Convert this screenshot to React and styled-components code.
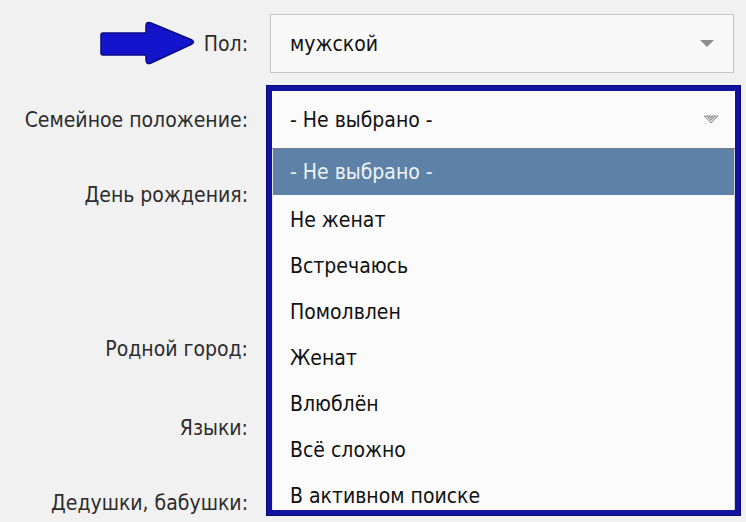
import React from 'react';
import styled, { createGlobalStyle } from 'styled-components';

const GlobalStyle = createGlobalStyle`
    html, body {
        margin: 0;
        padding: 0;
        background: #f1f1f1;
    }
    body {
        font-family: "DejaVu Sans Condensed", "DejaVu Sans", Tahoma, sans-serif;
        -webkit-font-smoothing: antialiased;
    }
`;

const Page = styled.div`
    width: 746px;
    height: 522px;
    overflow: hidden;
    box-sizing: border-box;
    padding-top: 14px;
    background: #f1f1f1;
    position: relative;
`;

const Row = styled.div`
    display: grid;
    grid-template-columns: 248px 464px;
    column-gap: 22px;
    height: ${props => props.height}px;
    margin-bottom: ${props => props.gap || 0}px;
    align-items: ${props => (props.top ? 'start' : 'center')};
`;

const Label = styled.div`
    display: flex;
    justify-content: flex-end;
    align-items: center;
    gap: 8px;
    font-size: 21px;
    line-height: 24px;
    color: #2c2c2c;
    padding-top: ${props => props.offset || 0}px;
    white-space: nowrap;
`;

const Select = styled.div`
    height: 59px;
    box-sizing: border-box;
    border: 1px solid #c6c6c6;
    background: #f9f9f9;
    display: flex;
    align-items: center;
    justify-content: space-between;
    padding: 0 18px 0 19px;
    font-size: 21px;
    color: #111;
`;

const FieldSlot = styled.div`
    position: relative;
    height: 100%;
`;

const OpenFrame = styled.div`
    position: absolute;
    top: 0;
    left: -3px;
    width: 473px;
    height: 429px;
    overflow: hidden;
    box-sizing: border-box;
    border: 5px solid #1212a0;
    box-shadow: 0 0 0 1px #0a0a78;
    background: #fbfbfb;
    z-index: 2;
`;

const OpenHead = styled.div`
    height: 57px;
    display: flex;
    align-items: center;
    justify-content: space-between;
    padding: 0 16px 0 18px;
    font-size: 21px;
    color: #111;
    border-bottom: 1px solid #7a7f86;
`;

const List = styled.div`
    display: flex;
    flex-direction: column;
    border-left: 1px solid #e6e6e6;
    border-right: 1px solid #d0d0d0;
`;

const Option = styled.div`
    height: 46px;
    box-sizing: border-box;
    display: flex;
    align-items: center;
    padding: ${props => (props.active ? '0' : '3px')} 0 0 17px;
    font-size: 21px;
    color: ${props => (props.active ? '#eef3f8' : '#111')};
    background: ${props => (props.active ? '#5e81a7' : 'transparent')};
`;

const Arrow = () => (
    <svg width="96" height="46" viewBox="0 0 96 46">
        <path
            d="M3 12 L46 12 L46 5 Q46 0 51 2 L92 19 Q95 21 92 23 L51 42 Q46 44 46 39 L46 34 L3 34 Q1 34 1 32 L1 14 Q1 12 3 12 Z"
            fill="#1414cc"
            stroke="#0a0a82"
            strokeWidth="1.5"
            strokeLinejoin="round"
        />
    </svg>
);

const Caret = ({ hatched }) => (
    <svg width="16" height="9" viewBox="0 0 16 9">
        {hatched ? (
            <>
                <path d="M1 1 L15 1 L8 8 Z" fill="#cfcfcf" stroke="#9a9a9a" strokeWidth="1" />
                <path d="M4 1 L8 5 L12 1 M6 1 L8 3 L10 1" stroke="#888" strokeWidth="0.8" fill="none" />
            </>
        ) : (
            <path d="M1 1 L15 1 L8 8 Z" fill="#8f8f8f" />
        )}
    </svg>
);

const options = [
    'Не женат',
    'Встречаюсь',
    'Помолвлен',
    'Женат',
    'Влюблён',
    'Всё сложно',
    'В активном поиске',
];

const App = () => (
    <>
        <GlobalStyle />
        <Page>
            <Row height={59} gap={13}>
                <Label>
                    <Arrow />
                    Пол:
                </Label>
                <Select>
                    мужской
                    <Caret />
                </Select>
            </Row>
            <Row height={68} top>
                <Label offset={22}>Семейное положение:</Label>
                <FieldSlot>
                    <OpenFrame>
                        <OpenHead>
                            - Не выбрано -
                            <Caret hatched />
                        </OpenHead>
                        <List>
                            <Option active>- Не выбрано -</Option>
                            {options.map(o => (
                                <Option key={o}>{o}</Option>
                            ))}
                        </List>
                    </OpenFrame>
                </FieldSlot>
            </Row>
            <Row height={156} top>
                <Label offset={29}>День рождения:</Label>
                <FieldSlot />
            </Row>
            <Row height={78}>
                <Label>Родной город:</Label>
                <FieldSlot />
            </Row>
            <Row height={80}>
                <Label>Языки:</Label>
                <FieldSlot />
            </Row>
            <Row height={70}>
                <Label>Дедушки, бабушки:</Label>
                <FieldSlot />
            </Row>
        </Page>
    </>
);

export default App;
